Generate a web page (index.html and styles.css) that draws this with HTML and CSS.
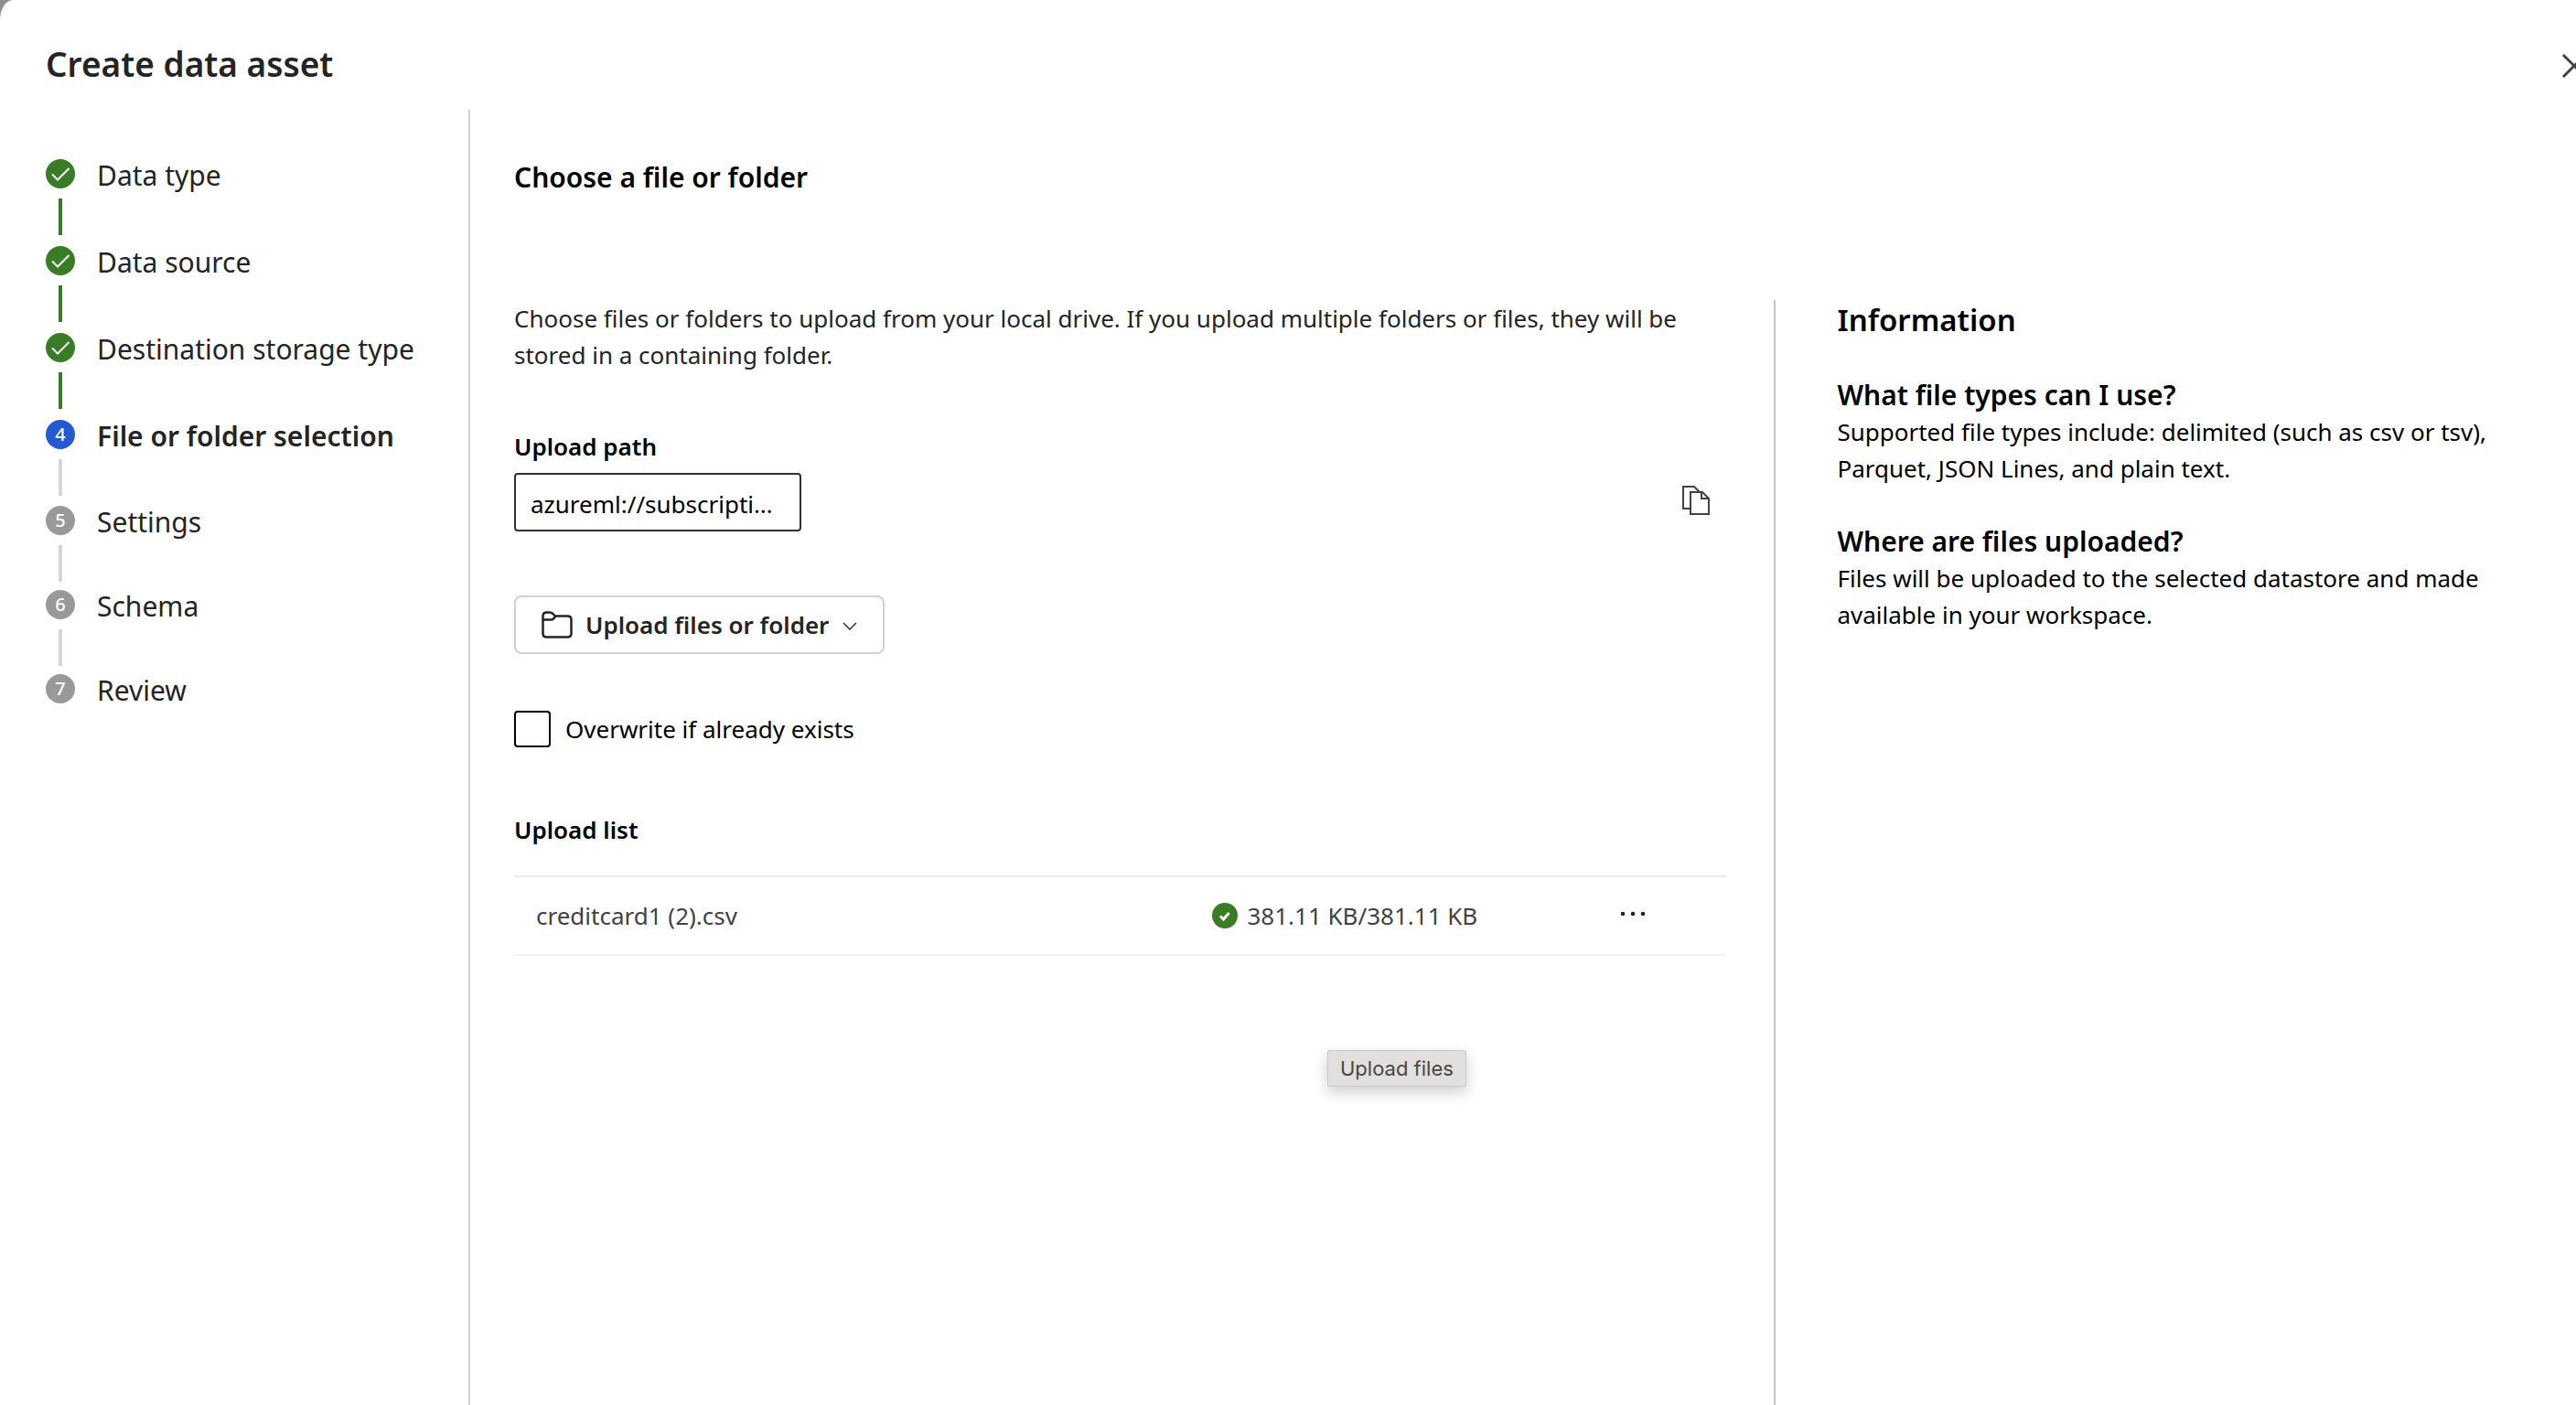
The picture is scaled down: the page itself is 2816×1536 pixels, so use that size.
FILE: index.html
```html
<!DOCTYPE html>
<html lang="en">
<head>
<meta charset="utf-8">
<title>Create data asset</title>
<link rel="stylesheet" href="styles.css">
</head>
<body>
<div class="dialog">
  <header class="dialog-header">
    <h1 class="dialog-title">Create data asset</h1>
    <button class="close-button" type="button" aria-label="Close">
      <svg class="close-icon" viewBox="0 0 28 28"><path d="M2 2l24 24M26 2L2 26"/></svg>
    </button>
  </header>
  <div class="dialog-body">
    <nav class="wizard-nav" aria-label="Steps">
      <ol class="steps">
        <li class="step done"><span class="badge"><svg class="tick" viewBox="0 0 32 32"><path d="M7 16.500l6 6L25.500 10"/></svg></span><span class="step-label">Data type</span></li>
        <li class="step done"><span class="badge"><svg class="tick" viewBox="0 0 32 32"><path d="M7 16.500l6 6L25.500 10"/></svg></span><span class="step-label">Data source</span></li>
        <li class="step done"><span class="badge"><svg class="tick" viewBox="0 0 32 32"><path d="M7 16.500l6 6L25.500 10"/></svg></span><span class="step-label">Destination storage type</span></li>
        <li class="step current" aria-current="step"><span class="badge">4</span><span class="step-label">File or folder selection</span></li>
        <li class="step"><span class="badge">5</span><span class="step-label">Settings</span></li>
        <li class="step"><span class="badge">6</span><span class="step-label">Schema</span></li>
        <li class="step"><span class="badge">7</span><span class="step-label">Review</span></li>
      </ol>
    </nav>
    <main class="content">
      <h2 class="content-title">Choose a file or folder</h2>
      <div class="columns">
        <section class="form">
          <p class="intro">Choose files or folders to upload from your local drive. If you upload multiple folders or files, they will be stored in a containing folder.</p>
          <label class="field-label" for="upload-path">Upload path</label>
          <div class="path-row">
            <input class="path-input" id="upload-path" type="text" readonly value="azureml://subscriptions/workspace/datastores">
            <button class="icon-button" type="button" aria-label="Copy upload path">
              <svg class="copy-icon" viewBox="0 0 30 32"><path d="M9 25H1V1h12l6 6M9 7h13l7 7v17H9zM21 7v7h8"/></svg>
            </button>
          </div>
          <button class="upload-button" type="button">
            <svg class="folder-icon" viewBox="0 0 34 30"><path d="M1.500 10V5.500q0-4 4-4H9q2.500 0 4 2l1.800 2H28.500q4 0 4 4v15q0 4-4 4h-23q-4 0-4-4zM1.500 9.500h9q2 0 3-1.500l1.800-2.500"/></svg>
            <span>Upload files or folder</span>
            <svg class="chevron" viewBox="0 0 16 10"><path d="M1 1l7 7 7-7"/></svg>
          </button>
          <div class="check-row">
            <input class="checkbox" id="overwrite" type="checkbox">
            <label for="overwrite">Overwrite if already exists</label>
          </div>
          <h3 class="list-title">Upload list</h3>
          <table class="upload-table" aria-label="Upload list">
            <tbody>
              <tr>
                <td class="name-cell">creditcard1 (2).csv</td>
                <td class="size-cell"><div class="size"><svg class="ok-icon" viewBox="0 0 28 28"><circle cx="14" cy="14" r="14"/><path d="M9 14.500l3.500 3.500 6-7"/></svg><span>381.11 KB/381.11 KB</span></div></td>
                <td class="menu-cell"><button class="icon-button" type="button" aria-label="More actions"><svg class="dots" viewBox="0 0 28 6"><circle cx="3" cy="3" r="2.300"/><circle cx="14" cy="3" r="2.300"/><circle cx="25" cy="3" r="2.300"/></svg></button></td>
              </tr>
            </tbody>
          </table>
        </section>
        <aside class="info">
          <h2 class="info-title">Information</h2>
          <h3 class="info-heading">What file types can I use?</h3>
          <p class="info-text">Supported file types include: delimited (such as csv or tsv), Parquet, JSON Lines, and plain text.</p>
          <h3 class="info-heading">Where are files uploaded?</h3>
          <p class="info-text">Files will be uploaded to the selected datastore and made available in your workspace.</p>
        </aside>
      </div>
    </main>
  </div>
  <div class="tooltip" role="tooltip">Upload files</div>
</div>
</body>
</html>
```
FILE: styles.css
```css
* {
  box-sizing: border-box;
}

body {
  margin: 0;
  background: #8f8f8f;
  color: #000;
  font: 26px/40px "Noto Sans", "Open Sans", sans-serif;
}

h1, h2, h3, p, ol {
  margin: 0;
  padding: 0;
}

h1, h2, h3 {
  font-weight: 600;
}

button, input {
  font: inherit;
  color: inherit;
}

svg {
  display: block;
  flex: none;
  fill: none;
  stroke: currentColor;
  stroke-width: 2;
}

.dialog {
  position: relative;
  display: flex;
  flex-direction: column;
  min-height: 100vh;
  overflow: hidden;
  background: #fff;
  border-top-left-radius: 14px 22px;
}

.dialog-header {
  display: flex;
  align-items: flex-start;
  justify-content: space-between;
  height: 120px;
  padding-left: 50px;
}

.dialog-title {
  padding-top: 46px;
  color: #242424;
  font-size: 37px;
  line-height: 48px;
}

.close-button {
  flex: none;
  margin: 58px -12px 0 0;
  padding: 0;
  border: 0;
  background: none;
  color: #424242;
}

.close-icon {
  width: 28px;
  height: 28px;
  stroke-width: 3;
}

.dialog-body {
  display: flex;
  flex: 1;
}

.wizard-nav {
  flex: none;
  width: 514px;
  padding: 54px 0 0 50px;
  border-right: 2px solid #d1d1d1;
}

.steps {
  list-style: none;
}

.step {
  position: relative;
  display: flex;
  gap: 24px;
  height: 92px;
  color: #242424;
  font-size: 30px;
  line-height: 36px;
}

.step.done {
  height: 95px;
}

.step.current {
  height: 94px;
}

.step:not(:last-child)::after {
  content: "";
  position: absolute;
  left: 14px;
  top: 43px;
  width: 4px;
  height: 40px;
  background: #d6d6d6;
}

.step.done::after {
  background: #387c25;
}

.badge {
  flex: none;
  width: 32px;
  height: 32px;
  border-radius: 50%;
  background: #999;
  color: #fff;
  font-size: 20px;
  line-height: 32px;
  font-weight: 500;
  text-align: center;
}

.done .badge {
  background: #387c25;
}

.current .badge {
  background: #2459d1;
}

.current .step-label {
  font-weight: 600;
}

.tick {
  width: 32px;
  height: 32px;
}

.content {
  display: flex;
  flex-direction: column;
  flex: 1;
  min-width: 0;
  padding: 54px 0 0 48px;
}

.content-title {
  font-size: 30px;
  line-height: 40px;
}

.columns {
  display: grid;
  grid-template-columns: 11fr 7fr;
  flex: 1;
  margin-top: 114px;
}

.form {
  min-width: 0;
  padding-right: 52px;
}

.intro {
  color: #242424;
}

.field-label, .list-title {
  display: block;
  font-size: 26px;
  font-weight: 600;
}

.field-label {
  margin-top: 60px;
}

.path-row {
  display: flex;
  align-items: center;
  justify-content: space-between;
  margin-top: 9px;
  padding-right: 18px;
}

.path-input {
  width: 314px;
  height: 64px;
  padding: 4px 28px 0 16px;
  border: 2px solid #323130;
  border-radius: 4px;
  background: #fff;
  text-overflow: ellipsis;
}

.icon-button {
  display: block;
  padding: 0 0 4px;
  border: 0;
  background: none;
  color: #424242;
}

.copy-icon {
  width: 30px;
  height: 32px;
}

.upload-button {
  display: flex;
  align-items: center;
  height: 64px;
  margin-top: 70px;
  padding: 0 28px;
  border: 2px solid #d1d1d1;
  border-radius: 8px;
  background: #fff;
  color: #242424;
  font-weight: 600;
}

.folder-icon {
  width: 34px;
  height: 30px;
  margin-right: 14px;
  stroke-width: 2.5;
}

.chevron {
  width: 16px;
  height: 10px;
  margin: 4px 0 0 15px;
  stroke-width: 1.4;
}

.check-row {
  display: flex;
  align-items: center;
  gap: 16px;
  margin-top: 62px;
}

.checkbox {
  appearance: none;
  width: 40px;
  height: 40px;
  margin: 0;
  border: 2px solid #000;
  border-radius: 4px;
}

.list-title {
  margin-top: 70px;
}

.upload-table {
  width: 100%;
  margin-top: 30px;
  border-collapse: collapse;
  table-layout: fixed;
  color: #424242;
}

.upload-table td {
  height: 86px;
  padding: 0;
  border-top: 2px solid #ebebeb;
  border-bottom: 2px solid #f2f2f2;
}

.upload-table .name-cell {
  padding-left: 24px;
}

.size-cell {
  width: 446px;
}

.size {
  display: flex;
  align-items: center;
  gap: 10px;
}

.ok-icon {
  width: 28px;
  height: 28px;
  stroke: none;
  fill: #387c25;
}

.ok-icon path {
  fill: none;
  stroke: #fff;
  stroke-width: 3;
}

.menu-cell {
  width: 116px;
}

.dots {
  width: 28px;
  height: 6px;
  stroke: none;
  fill: #242424;
}

.info {
  min-width: 0;
  padding: 0 80px 0 67px;
  border-left: 2px solid #c8c8c8;
}

.info-title {
  margin-bottom: 40px;
  font-size: 33px;
  line-height: 44px;
}

.info-heading {
  font-size: 30px;
  line-height: 40px;
}

.info-text {
  margin-bottom: 40px;
}

.tooltip {
  position: absolute;
  left: 1451px;
  top: 1148px;
  padding: 4px 13px;
  border: 1px solid #c8c8c6;
  border-radius: 2px;
  background: #e1e0de;
  box-shadow: 0 6px 16px rgba(0, 0, 0, 0.2);
  color: #484644;
  font: 22px/30px Inter, sans-serif;
}
```
